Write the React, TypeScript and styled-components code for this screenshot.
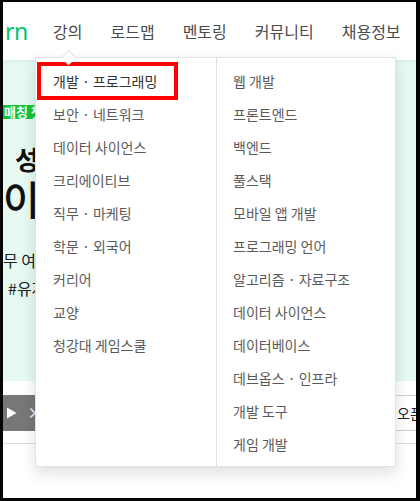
import styled, { createGlobalStyle } from 'styled-components';

const GlobalStyle = createGlobalStyle`
    * {
        box-sizing: border-box;
    }

    body {
        margin: 0;
        background: #000;
        font-family: 'Noto Sans CJK KR', 'Noto Sans', sans-serif;
    }
`;

const Frame = styled.div`
    width: 420px;
    height: 501px;
    padding: 2px 4px 3px 3px;
    background: #050505;
`;

const Page = styled.div`
    position: relative;
    display: flex;
    flex-direction: column;
    height: 100%;
    overflow: hidden;
    background: #fff;
`;

const Header = styled.header`
    position: relative;
    z-index: 2;
    display: flex;
    align-items: center;
    height: 58px;
    flex-shrink: 0;
    background: #fff;
    box-shadow: 0 2px 3px rgba(0, 0, 0, 0.05);
`;

const Logo = styled.span`
    width: 36px;
    padding-left: 2px;
    font-family: 'Noto Sans', sans-serif;
    font-size: 23px;
    font-weight: 400;
    letter-spacing: -0.5px;
    color: #00c471;
`;

const Nav = styled.nav`
    display: flex;
    white-space: nowrap;
`;

const NavItem = styled.span`
    padding: 0 14px;
    font-size: 16px;
    color: #4a4a4a;
`;

const Banner = styled.section`
    display: flex;
    flex-direction: column;
    height: 321px;
    flex-shrink: 0;
    padding-top: 45px;
    background: #e6faf1;
`;

const Badge = styled.span`
    align-self: flex-start;
    margin-left: -2px;
    padding: 0 3px;
    height: 14px;
    line-height: 14px;
    font-size: 13px;
    font-weight: 700;
    color: #fff;
    white-space: nowrap;
    background: #13c43b;
`;

const Title = styled.h2<{ $size: number; $indent: number; $weight: number }>`
    margin: 0;
    padding-left: ${(p) => p.$indent}px;
    font-size: ${(p) => p.$size}px;
    font-weight: ${(p) => p.$weight};
    line-height: 1.2;
    color: #111;
    white-space: nowrap;
`;

const Desc = styled.p<{ $indent: number }>`
    margin: 0;
    padding-left: ${(p) => p.$indent}px;
    font-size: 16px;
    line-height: 28px;
    color: #222;
    white-space: nowrap;
`;

const ControlRow = styled.div`
    display: flex;
    height: 36px;
    margin-top: 14px;
    flex-shrink: 0;
`;

const SlideControl = styled.div`
    display: flex;
    align-items: center;
    gap: 12px;
    width: 180px;
    flex-shrink: 0;
    padding-left: 3px;
    background: #777;
`;

const Notice = styled.div`
    flex: 1;
    min-width: 0;
    display: flex;
    align-items: center;
    overflow: hidden;
    padding-left: 214px;
    border-top: 1px solid #cfcfcf;
    border-bottom: 1px solid #cfcfcf;
    font-size: 14px;
    color: #222;
    white-space: nowrap;
`;

const Divider = styled.hr`
    margin: 12px 0 0;
    border: 0;
    border-top: 1px solid #dedede;
`;

const Dropdown = styled.div`
    position: absolute;
    z-index: 3;
    top: 55px;
    left: 32px;
    display: grid;
    grid-template-columns: 180px 1fr;
    width: 361px;
    height: 410px;
    background: #fff;
    border: 1px solid #e2e2e2;
    box-shadow: 0 6px 14px rgba(0, 0, 0, 0.13);

    &::before {
        content: '';
        position: absolute;
        top: -6px;
        left: 27px;
        width: 10px;
        height: 10px;
        background: #fff;
        border-top: 1px solid #e2e2e2;
        border-left: 1px solid #e2e2e2;
        transform: rotate(45deg);
    }
`;

const Column = styled.ul<{ $divided?: boolean }>`
    margin: 0;
    padding: 6px 0 0 ${(p) => (p.$divided ? 16 : 17)}px;
    list-style: none;
    border-left: ${(p) => (p.$divided ? '1px solid #e2e2e2' : 'none')};
`;

const Item = styled.li`
    display: flex;
    align-items: center;
    height: 33px;
    font-size: 14px;
    color: #5a5a5a;
    white-space: nowrap;
`;

const Marked = styled.span`
    display: inline-block;
    margin-left: -16px;
    padding: 7px 17px 7px 12px;
    line-height: 16px;
    border: 4px solid #ff0000;
    color: #333;
`;

const leftMenu = [
    '개발 · 프로그래밍',
    '보안 · 네트워크',
    '데이터 사이언스',
    '크리에이티브',
    '직무 · 마케팅',
    '학문 · 외국어',
    '커리어',
    '교양',
    '청강대 게임스쿨',
];

const rightMenu = [
    '웹 개발',
    '프론트엔드',
    '백엔드',
    '풀스택',
    '모바일 앱 개발',
    '프로그래밍 언어',
    '알고리즘 · 자료구조',
    '데이터 사이언스',
    '데이터베이스',
    '데브옵스 · 인프라',
    '개발 도구',
    '게임 개발',
];

const navItems = ['강의', '로드맵', '멘토링', '커뮤니티', '채용정보'];

const App = () => {
    return (
        <>
            <GlobalStyle />
            <Frame>
                <Page>
                    <Header>
                        <Logo>rn</Logo>
                        <Nav>
                            {navItems.map((a, i) => (
                                <NavItem key={i}>{a}</NavItem>
                            ))}
                        </Nav>
                    </Header>
                    <Banner>
                        <Badge>매칭 챗봇 오픈</Badge>
                        <Title $size={26} $indent={12} $weight={700} style={{ marginTop: 24 }}>
                            성장하는 개발자
                        </Title>
                        <Title $size={40} $indent={0} $weight={500}>
                            이제 함께해요
                        </Title>
                        <Desc $indent={0} style={{ marginTop: 24 }}>
                            무 여섯 가지 질문으로 찾는 나의 멘토
                        </Desc>
                        <Desc $indent={5}>#유저 추천 #커리어</Desc>
                    </Banner>
                    <ControlRow>
                        <SlideControl>
                            <svg width="11" height="12" viewBox="0 0 11 12">
                                <path d="M1 0.5 L10.5 6 L1 11.5 Z" fill="#fff" />
                            </svg>
                            <svg width="8" height="12" viewBox="0 0 8 12">
                                <path
                                    d="M1.5 1.5 L6 6 L1.5 10.5"
                                    fill="none"
                                    stroke="#e8ecff"
                                    strokeWidth="1.6"
                                />
                            </svg>
                        </SlideControl>
                        <Notice>오픈 예정</Notice>
                    </ControlRow>
                    <Divider />
                    <Dropdown>
                        <Column>
                            {leftMenu.map((a, i) => (
                                <Item key={i}>
                                    {i === 0 ? <Marked>{a}</Marked> : a}
                                </Item>
                            ))}
                        </Column>
                        <Column $divided>
                            {rightMenu.map((a, i) => (
                                <Item key={i}>{a}</Item>
                            ))}
                        </Column>
                    </Dropdown>
                </Page>
            </Frame>
        </>
    );
};

export default App;
